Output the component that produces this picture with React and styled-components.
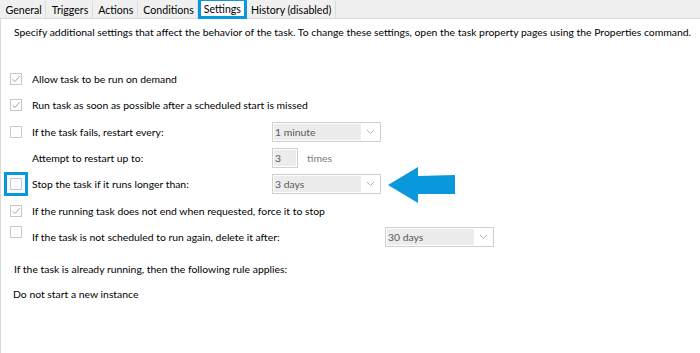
import styled, { createGlobalStyle } from 'styled-components';

const GlobalStyle = createGlobalStyle`
    html, body {
        margin: 0;
        padding: 0;
        background: #ffffff;
    }
    body {
        font-family: Lato, 'Noto Sans', sans-serif;
        font-size: 10.4px;
        color: #000000;
    }
`

const tabs = ['General', 'Triggers', 'Actions', 'Conditions', 'Settings', 'History (disabled)']

// each option row of the Settings page
const rows = [
    { label: 'Allow task to be run on demand', checked: true },
    { label: 'Run task as soon as possible after a scheduled start is missed', checked: true },
    { label: 'If the task fails, restart every:', control: 'combo', value: '1 minute' },
    { label: 'Attempt to restart up to:', noBox: true, control: 'count', value: '3' },
    { label: 'Stop the task if it runs longer than:', highlight: true, control: 'combo', value: '3 days', arrow: true },
    { label: 'If the running task does not end when requested, force it to stop', checked: true },
    { label: 'If the task is not scheduled to run again, delete it after:', raised: true, control: 'combo', value: '30 days', labelWidth: 353 },
]

const Check = () => (
    <svg width="10" height="10" viewBox="0 0 10 10">
        <path d="M1.5 5.2 L4 7.6 L8.6 2.2" fill="none" stroke="#a6a6a6" strokeWidth="1" />
    </svg>
)

const Chevron = () => (
    <svg width="9" height="6" viewBox="0 0 9 6">
        <path d="M1 1 L4.5 4.5 L8 1" fill="none" stroke="#b4b4b4" strokeWidth="1" />
    </svg>
)

const BlueArrow = () => (
    <svg width="68" height="36" viewBox="0 0 68 36">
        <path d="M0 18 L30 0 L30 9 L67 8 L67 27 L30 27 L30 36 Z" fill="#0a98dc" />
    </svg>
)

const App = () => {
    return (
        <Page>
            <GlobalStyle />
            <TabBar>
                {tabs.map((t) => (
                    <Tab key={t} $active={t === 'Settings'}>{t}</Tab>
                ))}
            </TabBar>
            <Panel>
                <Description>
                    Specify additional settings that affect the behavior of the task. To change these settings, open the task property pages using the Properties command.
                </Description>
                <Options>
                    {rows.map((r) => (
                        <Row key={r.label}>
                            <BoxCell>
                                {!r.noBox && (
                                    <Box $highlight={r.highlight} $raised={r.raised}>
                                        {r.checked && <Check />}
                                    </Box>
                                )}
                            </BoxCell>
                            <Label $width={r.labelWidth || 240}>{r.label}</Label>
                            {r.control === 'combo' && (
                                <Combo>
                                    <ComboText>{r.value}</ComboText>
                                    <ComboButton><Chevron /></ComboButton>
                                </Combo>
                            )}
                            {r.control === 'count' && (
                                <>
                                    <CountBox>{r.value}</CountBox>
                                    <Unit>times</Unit>
                                </>
                            )}
                            {r.arrow && <ArrowSpot><BlueArrow /></ArrowSpot>}
                        </Row>
                    ))}
                </Options>
                <RuleNote>If the task is already running, then the following rule applies:</RuleNote>
                <RuleValue>Do not start a new instance</RuleValue>
            </Panel>
        </Page>
    )
}

const Page = styled.div`
        width: 700px;
        height: 353px;
        display: flex;
        flex-direction: column;
        overflow: hidden;
`

const TabBar = styled.div`
        height: 18px;
        display: flex;
        align-items: flex-end;
        background: #f0f0f0;
        border-bottom: 1px solid #d9d9d9;
        padding-left: 2px;
        gap: 2px;
`

const Tab = styled.div`
        height: 17px;
        padding: 0 3.5px;
        display: flex;
        align-items: center;
        font-size: 10.6px;
        background: ${p => p.$active ? '#ffffff' : '#f0f0f0'};
        border-right: 1px solid #dcdcdc;
        outline: ${p => p.$active ? '3px solid #0a98dc' : 'none'};
        outline-offset: -1px;
        position: relative;
        top: ${p => p.$active ? '-1px' : '0'};
        z-index: ${p => p.$active ? 1 : 0};
`

const Panel = styled.div`
        flex: 1;
        border-left: 1px solid #d9d9d9;
        padding-top: 5px;
`

const Description = styled.div`
        padding-left: 13px;
        line-height: 16px;
        white-space: nowrap;
`

const Options = styled.div`
        margin-top: 26px;
        display: flex;
        flex-direction: column;
`

const Row = styled.div`
        height: 26.3px;
        display: flex;
        align-items: center;
`

const BoxCell = styled.div`
        width: 31px;
        display: flex;
        padding-left: 9px;
        box-sizing: border-box;
`

const Box = styled.div`
        width: 12px;
        height: 12px;
        box-sizing: border-box;
        border: 1px solid #c8c8c8;
        display: flex;
        align-items: center;
        justify-content: center;
        background: #ffffff;
        outline: ${p => p.$highlight ? '3px solid #0a98dc' : 'none'};
        outline-offset: 3px;
        margin-top: ${p => p.$raised ? '-9px' : '0'};
`

const Label = styled.div`
        width: ${p => p.$width}px;
        flex-shrink: 0;
        white-space: nowrap;
`

const Combo = styled.div`
        width: 109px;
        height: 20px;
        box-sizing: border-box;
        border: 1px solid #cfcfcf;
        padding: 1px;
        display: flex;
        background: #ffffff;
`

const ComboText = styled.div`
        flex: 1;
        background: #ececec;
        color: #595959;
        padding-left: 1px;
        display: flex;
        align-items: center;
`

const ComboButton = styled.div`
        width: 18px;
        display: flex;
        align-items: center;
        justify-content: center;
`

const CountBox = styled.div`
        width: 26px;
        height: 20px;
        box-sizing: border-box;
        border: 1px solid #cfcfcf;
        box-shadow: inset 0 0 0 1px #ffffff;
        background: #ececec;
        color: #595959;
        padding-left: 2px;
        display: flex;
        align-items: center;
`

const Unit = styled.div`
        margin-left: 9px;
        color: #7a7a7a;
`

const ArrowSpot = styled.div`
        margin-left: 7px;
        display: flex;
        margin-top: 2px;
`

const RuleNote = styled.div`
        margin-top: 11px;
        padding-left: 13px;
        line-height: 16px;
`

const RuleValue = styled.div`
        margin-top: 9px;
        padding-left: 12px;
        line-height: 16px;
`

export default App;
